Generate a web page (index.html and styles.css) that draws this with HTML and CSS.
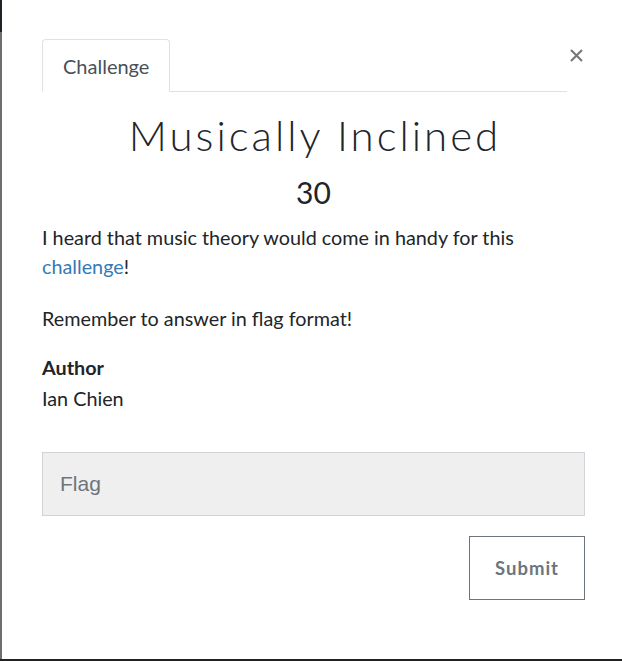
FILE: index.html
```
<!DOCTYPE html>
<html lang="en">
<head>
<meta charset="utf-8">
<title>Musically Inclined</title>
<link rel="stylesheet" href="styles.css">
</head>
<body>
<div class="backdrop">
  <div class="modal">
    <div class="modal-top">
      <ul class="tabs">
        <li class="tab">Challenge</li>
      </ul>
      <button class="close" type="button" aria-label="Close">
        <svg width="13" height="13" viewBox="0 0 13 13"><path d="M1 1 L12 12 M12 1 L1 12" stroke="#777" stroke-width="2.1" stroke-linecap="butt"/></svg>
      </button>
    </div>
    <h3 class="name">Musically Inclined</h3>
    <h4 class="value">30</h4>
    <div class="desc">
      <p>I heard that music theory would come in handy for this <a href="#">challenge</a>!</p>
      <p>Remember to answer in flag format!</p>
      <p class="author"><strong>Author</strong><br>Ian Chien</p>
    </div>
    <form class="flag-form">
      <input class="flag-input" type="text" placeholder="Flag">
      <div class="actions">
        <button class="submit" type="button">Submit</button>
      </div>
    </form>
  </div>
</div>
</body>
</html>
```
FILE: styles.css
```
* { box-sizing: border-box; }
html, body { margin: 0; padding: 0; }
body {
  font-family: Lato, "Open Sans", sans-serif;
  color: #212529;
  background: #fff;
}
.backdrop {
  height: 661px;
  padding: 0 0 2px 2px;
  background:
    linear-gradient(#222, #222) left bottom / 100% 2px no-repeat,
    linear-gradient(#1e2327 0 32px, #6e6e6e 32px);
}
.modal {
  width: 620px;
  height: 659px;
  background: #fff;
  padding: 39px 37px 0 40px;
}
.modal-top {
  display: flex;
  align-items: flex-start;
}
.tabs {
  flex: 1;
  list-style: none;
  margin: 0;
  padding: 0;
  display: flex;
  border-bottom: 1px solid #dee2e6;
}
.tab {
  height: 53px;
  margin-bottom: -1px;
  padding: 1px 20px 0;
  border: 1px solid #dee2e6;
  border-bottom-color: #fff;
  border-radius: 4px 4px 0 0;
  font-size: 20px;
  line-height: 50px;
  color: #495057;
}
.close {
  width: 18px;
  padding: 10px 0 0 3px;
  margin: 0;
  border: 0;
  background: none;
  display: flex;
  cursor: pointer;
}
.name {
  margin: 18px 0 0;
  padding-left: 3px;
  text-align: center;
  font-weight: 300;
  font-size: 42px;
  line-height: 1.2;
  letter-spacing: 3px;
}
.value {
  margin: 14px 0 0;
  text-align: center;
  font-weight: 400;
  font-size: 30px;
  line-height: 1.2;
}
.desc {
  margin-top: 13px;
  font-size: 19.8px;
  line-height: 28.8px;
}
.desc p { margin: 0 0 23px; }
.desc a { color: #337ab7; text-decoration: none; }
.desc .author { line-height: 31px; margin: -4px 0 0; }
.author strong { font-weight: 700; }
.flag-form { margin-top: 38px; }
.flag-input {
  display: block;
  width: 100%;
  height: 64px;
  padding: 0 17px;
  background: #efefef;
  border: 1px solid #d0d4d8;
  border-radius: 0;
  font-family: "Liberation Sans", Arial, sans-serif;
  font-size: 21px;
  color: #495057;
}
.flag-input::placeholder { color: #6c757d; }
.actions {
  display: flex;
  justify-content: flex-end;
  margin-top: 20px;
}
.submit {
  width: 116px;
  height: 64px;
  background: #fff;
  border: 1px solid #6c757d;
  border-radius: 0;
  font-family: Lato, sans-serif;
  font-weight: 700;
  font-size: 18.5px;
  letter-spacing: 1px;
  color: #6c757d;
}
```
